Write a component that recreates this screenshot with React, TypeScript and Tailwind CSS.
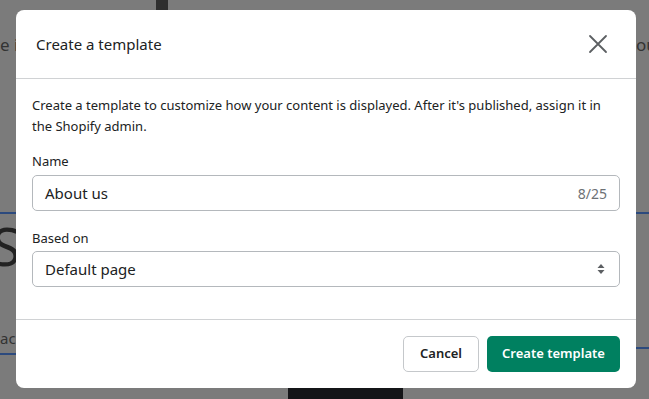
import React from "react";

const font = { fontFamily: '"Noto Sans", "Open Sans", Arial, sans-serif' };

const CloseIcon = () => (
  <svg width="20" height="20" viewBox="0 0 20 20" fill="none" stroke="#5c5f62" strokeWidth="1.8" strokeLinecap="round">
    <path d="M2 2 L18 18 M18 2 L2 18" />
  </svg>
);

const SelectArrows = () => (
  <svg width="10" height="14" viewBox="0 0 10 14" fill="#5c5f62">
    <path d="M5 2 L8.5 6 H1.5 Z" />
    <path d="M5 12 L8.5 8 H1.5 Z" />
  </svg>
);

// dimmed page content peeking out beside the dialog
const LeftGutter = () => (
  <div className="flex w-[16px] shrink-0 flex-col overflow-hidden whitespace-nowrap text-[#333]">
    <div className="mt-[34px] h-[22px] w-[16px] overflow-hidden text-[17px] leading-[22px]">e i</div>
    <div className="mt-[156px] h-[2px] w-full bg-[#2c4a7e]" />
    <div className="mt-[6px] h-[52px] w-[16px] overflow-hidden text-[52px] leading-[52px] text-[#222]">
      <span className="ml-[-8px]">St</span>
    </div>
    <div className="mt-[56px] h-[20px] w-[16px] overflow-hidden text-[15px] leading-[20px]">ac</div>
    <div className="mt-[5px] h-[2px] w-full bg-[#2c4a7e]" />
  </div>
);

const RightGutter = () => (
  <div className="flex w-[13px] shrink-0 flex-col overflow-hidden whitespace-nowrap text-[#333]">
    <div className="mt-[34px] h-[22px] w-[13px] overflow-hidden text-[17px] leading-[22px]">ou</div>
    <div className="mt-[156px] h-[2px] w-full bg-[#2c4a7e]" />
    <div className="mt-[133px] h-[2px] w-full bg-[#2c4a7e]" />
  </div>
);

export default function App() {
  return (
    <div className="flex h-[399px] w-[649px] overflow-hidden bg-[#7b7b7b]" style={font}>
      <LeftGutter />

      <div className="flex w-[620px] shrink-0 flex-col">
        <div className="h-[10px] shrink-0 pl-[140px]">
          <div className="h-[10px] w-[12px] bg-[#2f2f2f]" />
        </div>

        <div className="shrink-0 overflow-hidden rounded-lg bg-white text-[#202223]">
          <div className="flex h-[69px] items-center justify-between border-b border-[#d0d2d4] pl-[20px] pr-[28px]">
            <span className="text-[15px]">Create a template</span>
            <CloseIcon />
          </div>

          <div className="px-[16px] pb-[32px] pt-[16px]">
            <p className="text-[13px] leading-[21px]">
              Create a template to customize how your content is displayed. After it's published, assign it in
              the Shopify admin.
            </p>

            <div className="mt-[14px] text-[13px] leading-[20px]">Name</div>
            <div className="mt-[4px] flex h-[36px] items-center justify-between rounded-[5px] border border-[#b4b8bc] px-[12px]">
              <span className="text-[15px]">About us</span>
              <span className="text-[14px] text-[#6d7175]">8/25</span>
            </div>

            <div className="mt-[17px] text-[13px] leading-[20px]">Based on</div>
            <div className="mt-[3px] flex h-[36px] items-center justify-between rounded-[5px] border border-[#b4b8bc] pl-[12px] pr-[13px]">
              <span className="text-[15px]">Default page</span>
              <SelectArrows />
            </div>
          </div>

          <div className="flex justify-end gap-[8px] border-t border-[#d0d2d4] p-[16px]">
            <button className="h-[36px] w-[76px] rounded-[5px] border border-[#c5c8cb] bg-white text-[13px] font-semibold text-[#202223]">
              Cancel
            </button>
            <button className="h-[36px] w-[133px] rounded-[5px] bg-[#008060] text-[13px] font-semibold text-white">
              Create template
            </button>
          </div>
        </div>

        <div className="ml-[272px] h-[20px] w-[115px] shrink-0 bg-[#141518]" />
      </div>

      <RightGutter />
    </div>
  );
}
